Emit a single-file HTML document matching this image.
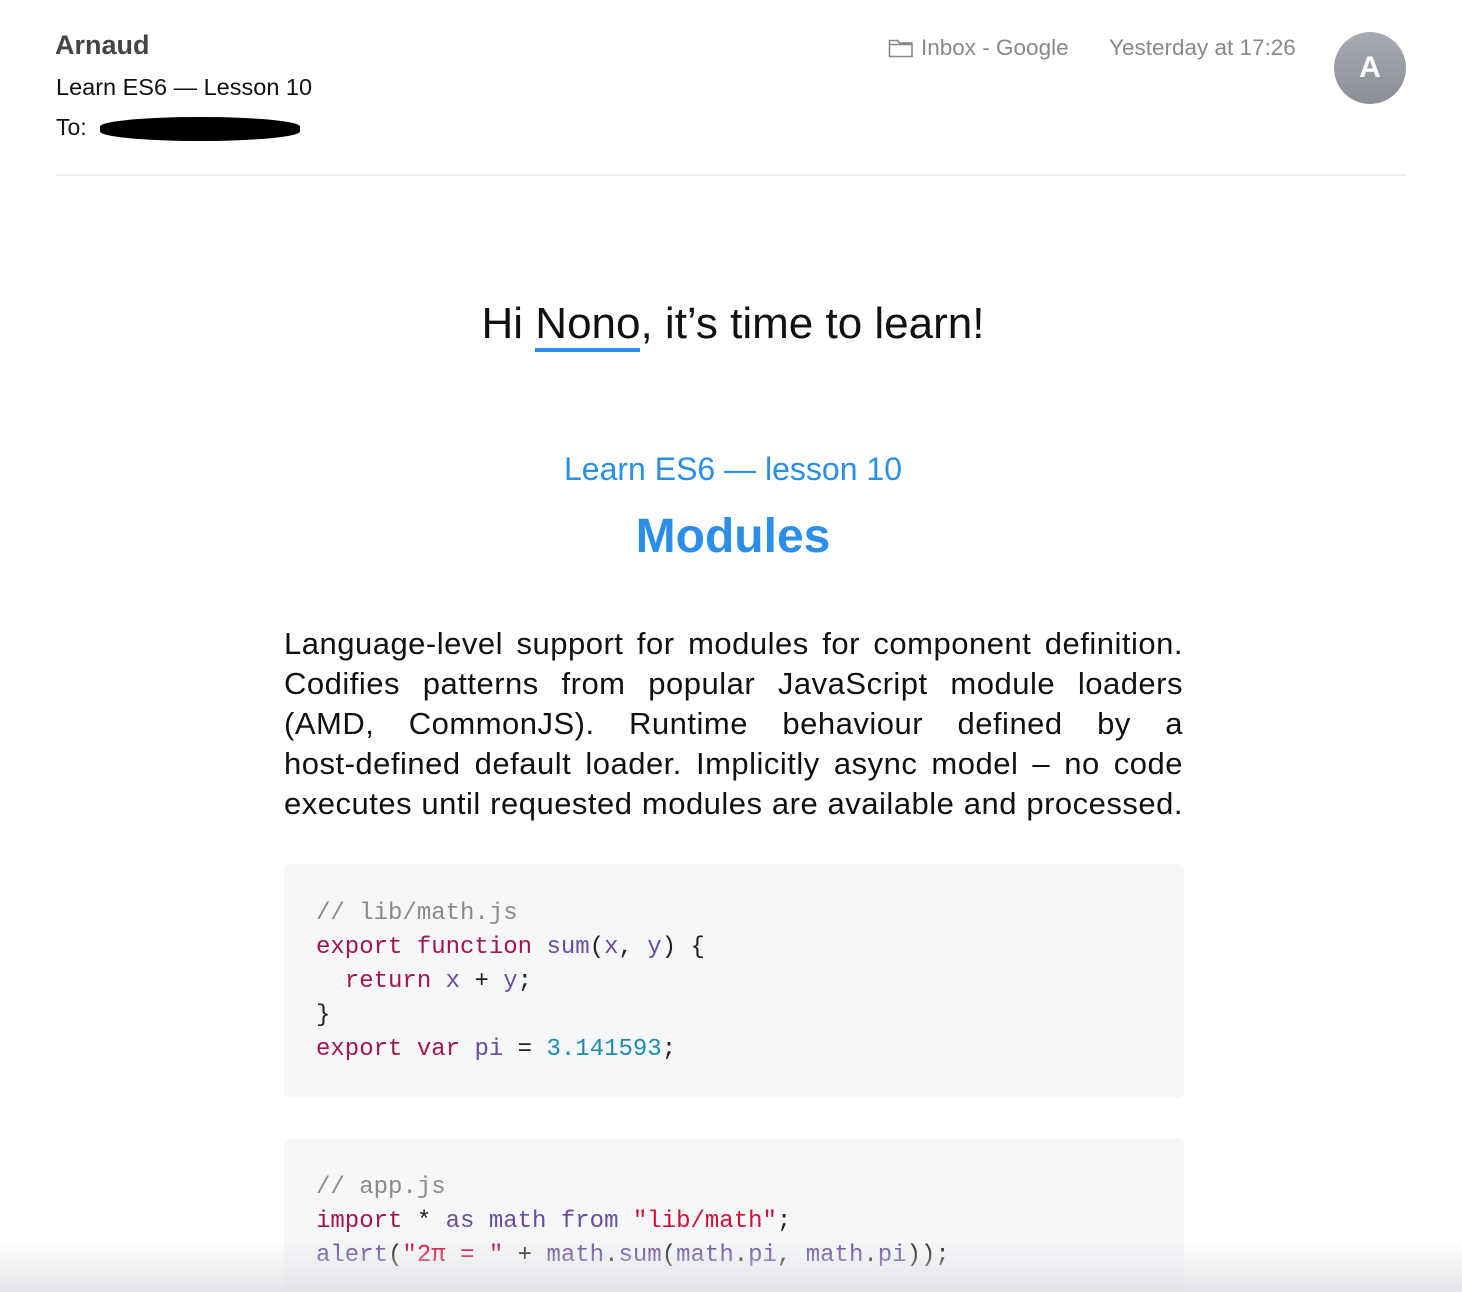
<!DOCTYPE html>
<html style="overflow:hidden;height:1292px"><head><meta charset="utf-8"><style>
body{margin:0;width:1462px;height:1292px;overflow:hidden;background:#fff;font-family:"Liberation Sans",sans-serif;position:relative}
.a{position:absolute}
.code{position:absolute;left:284px;width:900px;background:#f6f7f9;border-radius:6px;font-family:"Liberation Mono",monospace;font-size:24px;line-height:34px;padding-left:32px;box-sizing:border-box;white-space:pre;color:#222}
.c{color:#8a8a8a}.k{color:#a3154f}.v{color:#6a4c9c}.n{color:#1d8ab0}.s{color:#d0103a}
.p div{text-align:justify;text-align-last:justify;height:40px;white-space:nowrap}
</style></head><body>
<div class="a" style="left:55px;top:30px;font-size:27px;font-weight:bold;color:#444">Arnaud</div>
<div class="a" style="left:56px;top:74px;font-size:23.5px;color:#111">Learn ES6 — Lesson 10</div>
<div class="a" style="left:56px;top:114px;font-size:23px;color:#111">To:</div>
<div class="a" style="left:100px;top:117px;width:200px;height:24px;background:#000;border-radius:50%/40%"></div>
<svg class="a" style="left:888px;top:38px" width="26" height="20" viewBox="0 0 26 20"><path d="M1.5 2.5h8l2 2.5h12.5v13.5h-22.5z M1.5 6.5h22.5" fill="none" stroke="#888" stroke-width="1.6"/></svg>
<div class="a" style="left:921px;top:35px;font-size:22.5px;color:#888">Inbox - Google</div>
<div class="a" style="left:1109px;top:35px;font-size:22.5px;color:#888">Yesterday at 17:26</div>
<div class="a" style="left:1334px;top:32px;width:72px;height:72px;border-radius:50%;background:linear-gradient(#a8abb3,#8b8e96);color:#fff;font-size:30px;font-weight:bold;text-align:center;line-height:72px">A</div>
<div class="a" style="left:56px;top:174px;width:1350px;height:2px;background:#eee"></div>
<div class="a" style="left:0;width:1466px;top:299px;text-align:center;font-size:44px;color:#111">Hi <span style="border-bottom:4px solid #2b8fe8">Nono</span>, it’s time to learn!</div>
<div class="a" style="left:0;width:1466px;top:451px;text-align:center;font-size:32px;color:#2b8fe8">Learn ES6 — lesson 10</div>
<div class="a" style="left:0;width:1466px;top:509px;text-align:center;font-size:48px;font-weight:bold;color:#2b8fe8">Modules</div>
<div class="a p" style="left:284px;top:624px;width:899px;font-size:31px;letter-spacing:0.5px;line-height:40px;color:#111">
<div>Language-level support for modules for component definition.</div>
<div>Codifies patterns from popular JavaScript module loaders</div>
<div>(AMD, CommonJS). Runtime behaviour defined by a</div>
<div>host-defined default loader. Implicitly async model – no code</div>
<div>executes until requested modules are available and processed.</div>
</div>
<div class="code" style="top:864px;height:234px;padding-top:33px"><span class="c">// lib/math.js</span>
<span class="k">export function</span> <span class="v">sum</span>(<span class="v">x</span>, <span class="v">y</span>) {
  <span class="k">return</span> <span class="v">x</span> + <span class="v">y</span>;
}
<span class="k">export var</span> <span class="v">pi</span> = <span class="n">3.141593</span>;</div>
<div class="code" style="top:1138px;height:154px;padding-top:33px;border-radius:6px 6px 0 0"><span class="c">// app.js</span>
<span class="k">import</span> * <span class="v">as math from</span> <span class="s">"lib/math"</span>;
<span class="v">alert</span>(<span class="s">"2π = "</span> + <span class="v">math</span>.<span class="v">sum</span>(<span class="v">math</span>.<span class="v">pi</span>, <span class="v">math</span>.<span class="v">pi</span>));</div>
<div class="a" style="left:0;top:1240px;width:1462px;height:52px;background:linear-gradient(rgba(230,231,234,0),rgba(225,226,229,0.9))"></div>
</body></html>
